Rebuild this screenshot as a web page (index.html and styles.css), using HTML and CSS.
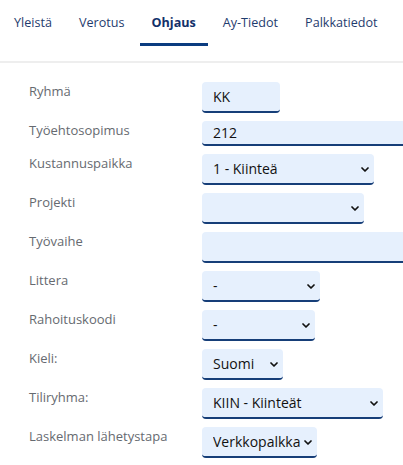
FILE: index.html
```html
<!DOCTYPE html>
<html lang="fi">
<head>
<meta charset="utf-8">
<link rel="stylesheet" href="styles.css">
</head>
<body>
<nav class="tabs">
  <a class="tab">Yleistä</a>
  <a class="tab">Verotus</a>
  <a class="tab active">Ohjaus</a>
  <a class="tab">Ay-Tiedot</a>
  <a class="tab">Palkkatiedot</a>
</nav>
<form class="form">
  <div class="row"><label class="lbl">Ryhmä</label><input class="fld w-ryhma" value="KK"></div>
  <div class="row short"><label class="lbl">Työehtosopimus</label><input class="fld fld-short w-full" value="212"></div>
  <div class="row"><label class="lbl">Kustannuspaikka</label>
    <span class="sel w-kust"><select class="fld"><option>1 - Kiinteä</option></select><svg class="chev" viewBox="0 0 8 5"><path d="M1 1 L4 4 L7 1"/></svg></span></div>
  <div class="row"><label class="lbl">Projekti</label>
    <span class="sel w-proj"><select class="fld"><option></option></select><svg class="chev" viewBox="0 0 8 5"><path d="M1 1 L4 4 L7 1"/></svg></span></div>
  <div class="row"><label class="lbl">Työvaihe</label><input class="fld w-full" value=""></div>
  <div class="row"><label class="lbl">Littera</label>
    <span class="sel w-litt"><select class="fld"><option>-</option></select><svg class="chev" viewBox="0 0 8 5"><path d="M1 1 L4 4 L7 1"/></svg></span></div>
  <div class="row"><label class="lbl">Rahoituskoodi</label>
    <span class="sel w-rah"><select class="fld"><option>-</option></select><svg class="chev" viewBox="0 0 8 5"><path d="M1 1 L4 4 L7 1"/></svg></span></div>
  <div class="row"><label class="lbl">Kieli:</label>
    <span class="sel w-kieli"><select class="fld"><option>Suomi</option></select><svg class="chev" viewBox="0 0 8 5"><path d="M1 1 L4 4 L7 1"/></svg></span></div>
  <div class="row"><label class="lbl">Tiliryhma:</label>
    <span class="sel w-tili"><select class="fld"><option>KIIN - Kiinteät</option></select><svg class="chev" viewBox="0 0 8 5"><path d="M1 1 L4 4 L7 1"/></svg></span></div>
  <div class="row"><label class="lbl">Laskelman lähetystapa</label>
    <span class="sel w-lask"><select class="fld"><option>Verkkopalkka</option></select><svg class="chev" viewBox="0 0 8 5"><path d="M1 1 L4 4 L7 1"/></svg></span></div>
</form>
</body>
</html>
```

FILE: styles.css
```css
* { box-sizing: border-box; }
html, body { margin: 0; padding: 0; background: #fff; overflow: hidden; }
body { font-family: "Open Sans", "Liberation Sans", sans-serif; width: 403px; height: 465px; }

.tabs {
  display: flex;
  gap: 3px;
  padding: 0 0 15px 2px;
  border-bottom: 2px solid #eeeeee;
}
.tab {
  display: block;
  padding: 13px 12px 10px;
  line-height: 20px;
  font-size: 12.6px;
  font-weight: 500;
  color: #1f3c6e;
  border-bottom: 3px solid transparent;
  white-space: nowrap;
}
.tab.active {
  font-weight: 700;
  color: #12306a;
  border-bottom-color: #0b3c80;
}

.form {
  padding: 19px 0 0 29px;
  display: flex;
  flex-direction: column;
  gap: 8px;
}
.row {
  display: flex;
  align-items: flex-start;
  height: 31px;
}
.row.short { height: 25px; }
.lbl {
  width: 173px;
  flex: none;
  font-size: 13px;
  line-height: 18px;
  color: #666a70;
}
.fld {
  display: block;
  height: 31px;
  margin: 0;
  padding: 0 11px;
  border: none;
  border-bottom: 2px solid #163e78;
  border-radius: 4px;
  background: #e6f0fd;
  font-family: "Open Sans", "Liberation Sans", sans-serif;
  font-size: 14px;
  color: #111;
  outline: none;
}
.fld-short { height: 25px; }
select.fld {
  -webkit-appearance: none;
  appearance: none;
  width: 100%;
}
.sel {
  position: relative;
  display: block;
  flex: none;
}
.chev {
  position: absolute;
  right: 5px;
  top: 13px;
  width: 8px;
  height: 5px;
  fill: none;
  stroke: #111;
  stroke-width: 1.7;
  stroke-linecap: round;
  stroke-linejoin: round;
  pointer-events: none;
}
.w-ryhma { width: 78px; flex: none; }
.w-full { width: 220px; flex: none; }
.w-kust { width: 172px; }
.w-proj { width: 162px; }
.w-litt { width: 118px; }
.w-rah { width: 113px; }
.w-kieli { width: 81px; }
.w-tili { width: 181px; }
.w-lask { width: 115px; }
```
